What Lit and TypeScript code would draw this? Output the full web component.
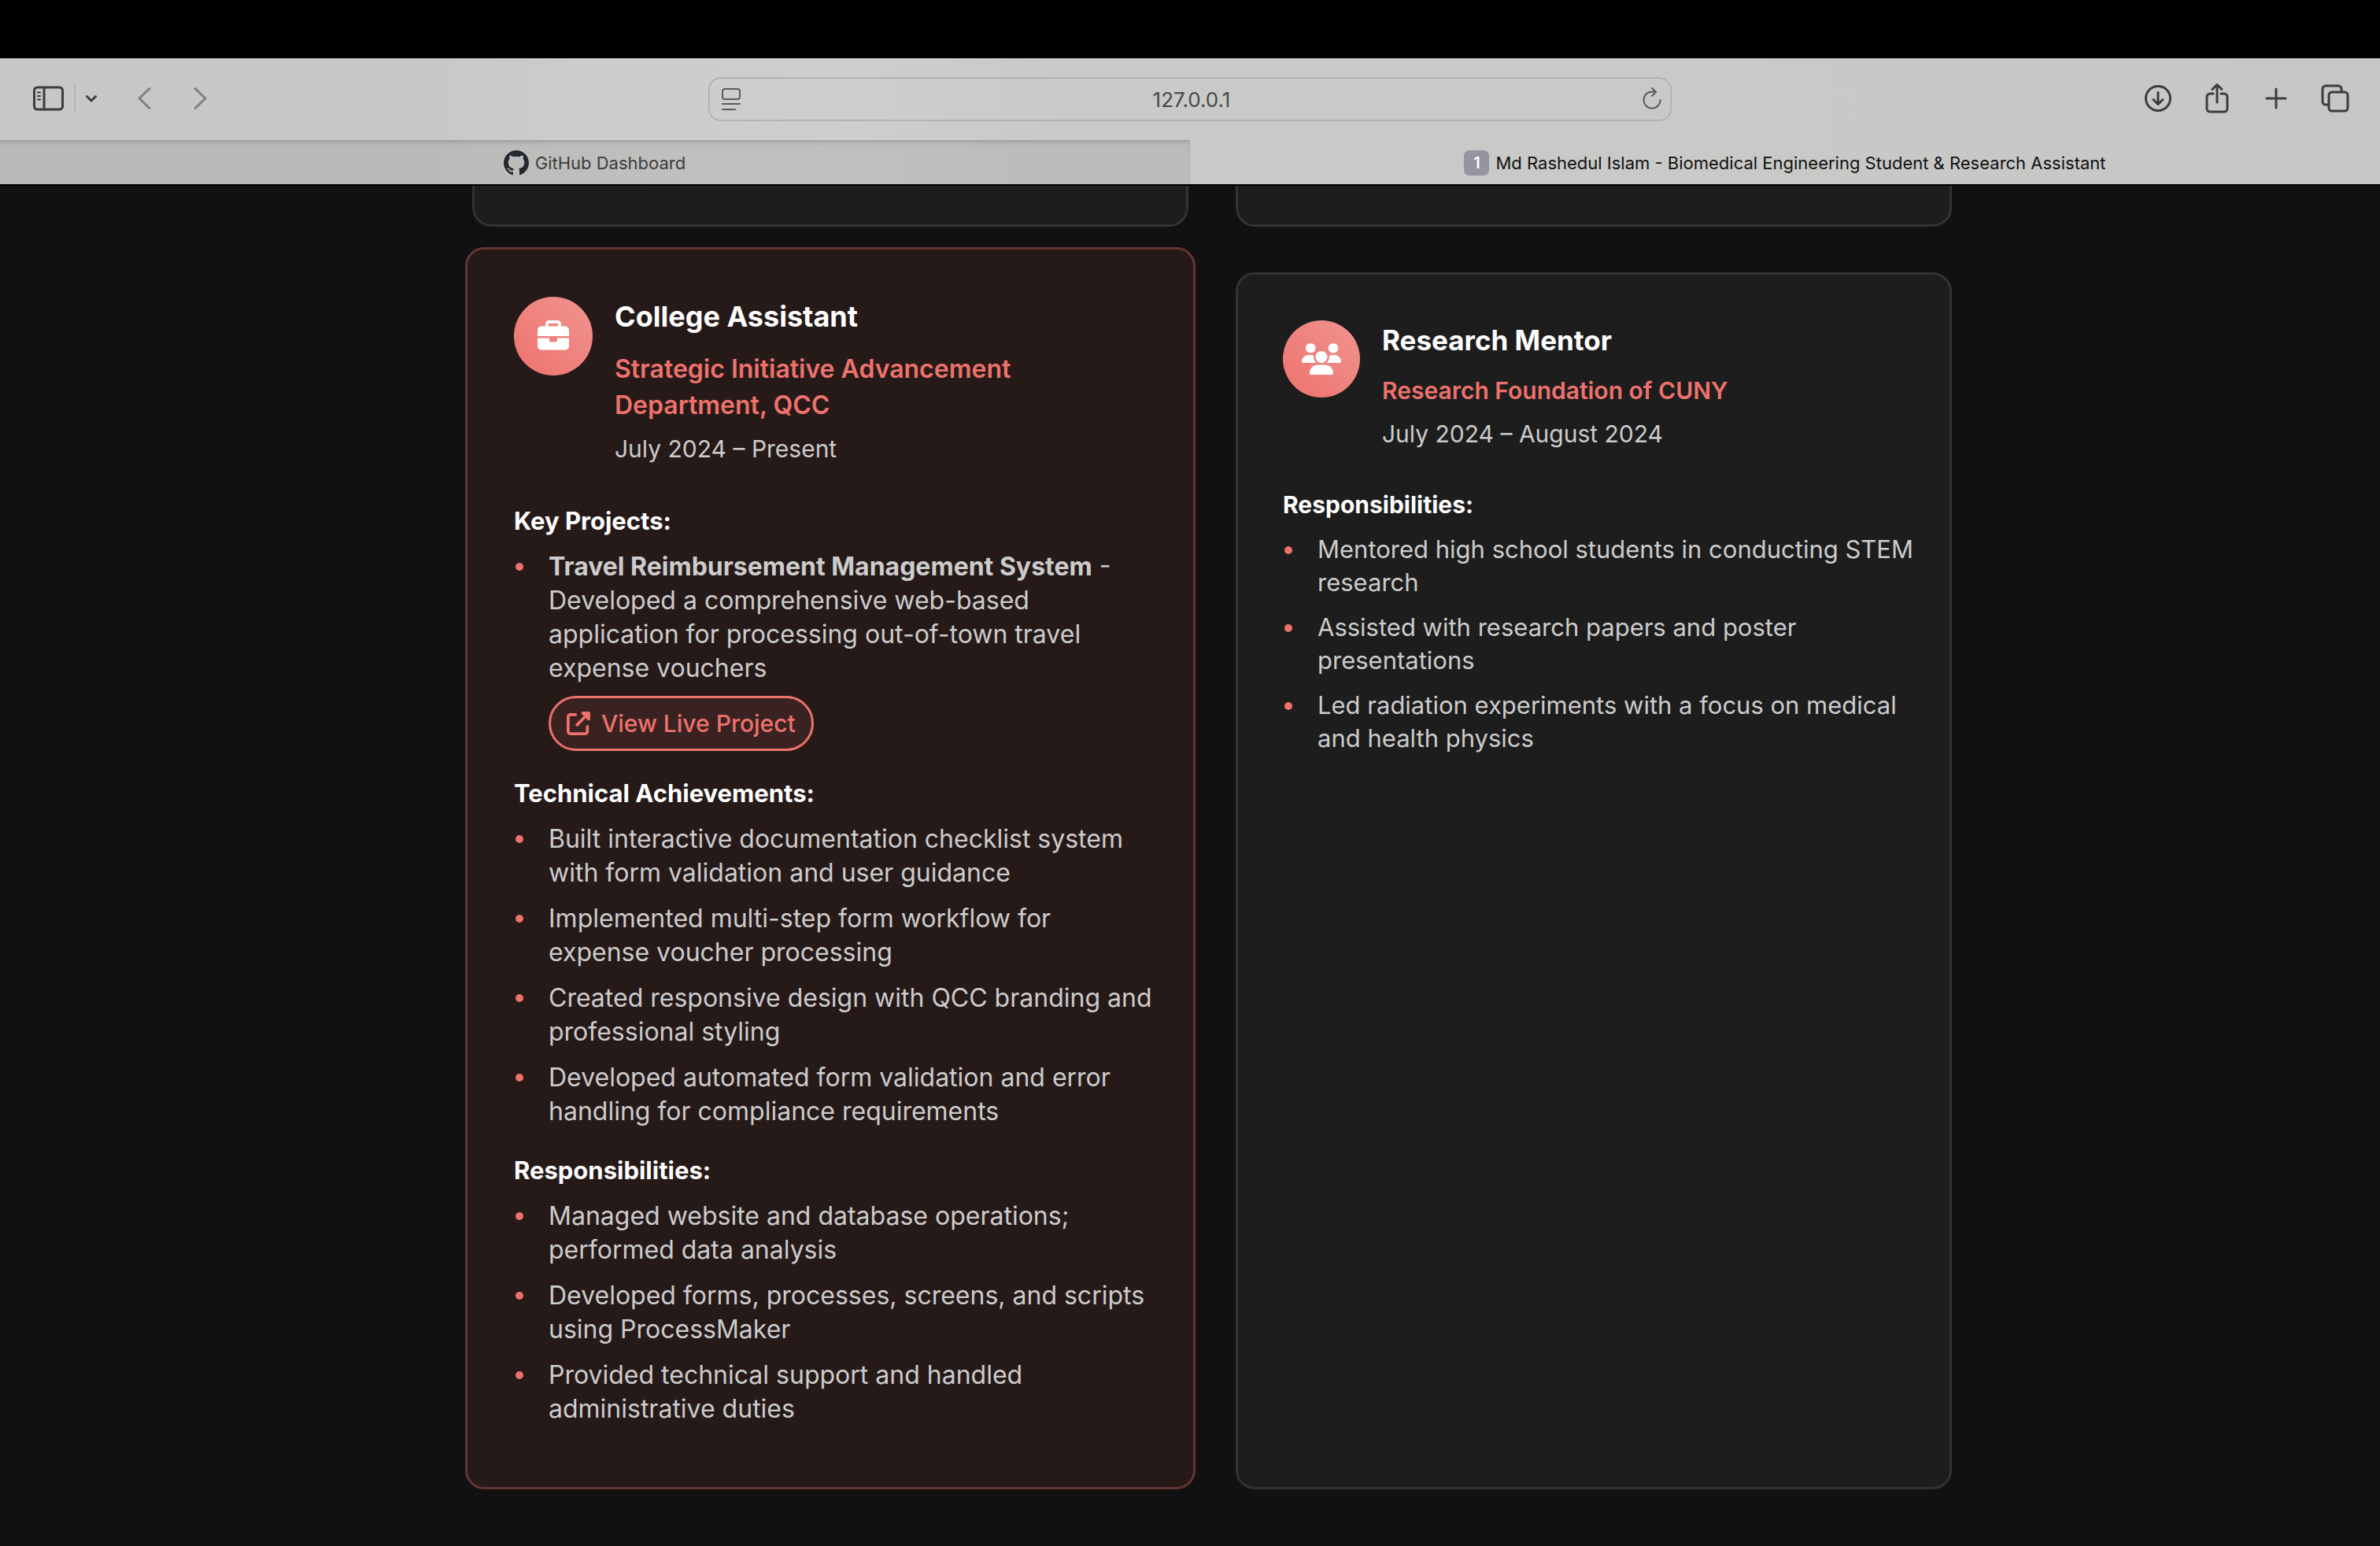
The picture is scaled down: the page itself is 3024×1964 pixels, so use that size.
import { LitElement, html, svg, css, nothing } from "lit";
import { customElement } from "lit/decorators.js";

interface Item { lead?: string; text: string; link?: string }
interface Section { title: string; items: Item[] }
interface Job { icon: "briefcase" | "users"; role: string; org: string; dates: string; active: boolean; sections: Section[] }

const JOBS: Job[] = [
  {
    icon: "briefcase",
    role: "College Assistant",
    org: "Strategic Initiative Advancement Department, QCC",
    dates: "July 2024 – Present",
    active: true,
    sections: [
      {
        title: "Key Projects:",
        items: [
          {
            lead: "Travel Reimbursement Management System",
            text: " - Developed a comprehensive web-based application for processing out-of-town travel expense vouchers",
            link: "View Live Project",
          },
        ],
      },
      {
        title: "Technical Achievements:",
        items: [
          { text: "Built interactive documentation checklist system with form validation and user guidance" },
          { text: "Implemented multi-step form workflow for expense voucher processing" },
          { text: "Created responsive design with QCC branding and professional styling" },
          { text: "Developed automated form validation and error handling for compliance requirements" },
        ],
      },
      {
        title: "Responsibilities:",
        items: [
          { text: "Managed website and database operations; performed data analysis" },
          { text: "Developed forms, processes, screens, and scripts using ProcessMaker" },
          { text: "Provided technical support and handled administrative duties" },
        ],
      },
    ],
  },
  {
    icon: "users",
    role: "Research Mentor",
    org: "Research Foundation of CUNY",
    dates: "July 2024 – August 2024",
    active: false,
    sections: [
      {
        title: "Responsibilities:",
        items: [
          { text: "Mentored high school students in conducting STEM research" },
          { text: "Assisted with research papers and poster presentations" },
          { text: "Led radiation experiments with a focus on medical and health physics" },
        ],
      },
    ],
  },
];

const JOB_ICONS = {
  briefcase: svg`<svg viewBox="0 0 512 512" width="40" height="40" fill="#fff" aria-hidden="true"><path d="M184 48H328c4.400 0 8 3.600 8 8V96H176V56c0-4.400 3.600-8 8-8zm-56 8V96H64C28.700 96 0 124.700 0 160v96H192 320 512V160c0-35.300-28.700-64-64-64H384V56c0-30.900-25.100-56-56-56H184c-30.900 0-56 25.100-56 56zM512 288H320v32c0 17.700-14.300 32-32 32H224c-17.700 0-32-14.300-32-32V288H0V416c0 35.300 28.700 64 64 64H448c35.300 0 64-28.700 64-64V288z"/></svg>`,
  users: svg`<svg viewBox="0 0 640 512" width="50" height="40" fill="#fff" aria-hidden="true"><path d="M144 0a80 80 0 1 1 0 160A80 80 0 1 1 144 0zM512 0a80 80 0 1 1 0 160A80 80 0 1 1 512 0zM0 298.700C0 239.800 47.800 192 106.700 192h42.700c15.900 0 31 3.500 44.600 9.700c-1.300 7.200-1.900 14.700-1.900 22.300c0 38.200 16.800 72.500 43.300 96c-.2 0-.4 0-.7 0H21.300C9.600 320 0 310.400 0 298.700zM405.300 320c-.2 0-.4 0-.7 0c26.600-23.500 43.300-57.800 43.300-96c0-7.600-.7-15-1.900-22.300c13.600-6.300 28.700-9.700 44.600-9.700h42.700C592.200 192 640 239.800 640 298.700c0 11.800-9.600 21.300-21.300 21.300H405.300zM224 224a96 96 0 1 1 192 0 96 96 0 1 1-192 0zM128 485.300C128 411.700 187.700 352 261.300 352H378.700C452.300 352 512 411.700 512 485.300c0 14.700-11.900 26.700-26.700 26.700H154.700c-14.700 0-26.700-11.900-26.700-26.700z"/></svg>`,
};

@customElement("browser-chrome")
export class BrowserChrome extends LitElement {
  static styles = css`
    :host { display: block; font-family: Inter, "Liberation Sans", sans-serif; }
    .menu-strip { height: 74px; background: #000; }
    .chrome { background: linear-gradient(90deg, #c7c7c5 0%, #c7c7c5 17%, #cccccb 24%, #cececc 36%, #c9c9c7 45%, #c9c9c7 70%, #c6c6c5 100%); }
    .toolbar { height: 104px; display: grid; grid-template-columns: 1fr 1224px 1fr; align-items: center; }
    .group { display: flex; align-items: center; padding-bottom: 2px; }
    .left { padding-left: 40px; }
    .right { justify-content: flex-end; gap: 33px; padding-right: 36px; }
    button { border: 0; padding: 0; margin: 0; background: none; color: #3d3d3c; font: inherit; display: block; }
    svg { display: block; }
    .divider { width: 2px; height: 36px; background: #b6b6b4; margin: 0 12px; }
    .nav { color: #7f7f7e; }
    .back { margin-left: 50px; }
    .forward { margin-left: 50px; }
    .address { display: flex; align-items: center; height: 56px; box-sizing: border-box; border: 2px solid #b2b2b0; border-radius: 16px; padding: 0 10px 0 14px; color: #5b5b5a; }
    .address input { flex: 1; min-width: 0; border: 0; padding: 0; background: none; outline: none; text-align: center; font: 26px Inter, "Liberation Sans", sans-serif; color: #484847; }
    .address button { color: #5b5b5a; }
    .tabs { display: grid; grid-template-columns: 1fr 1fr; height: 58px; border-bottom: 2px solid #000; box-sizing: border-box; }
    .tab { display: flex; align-items: center; justify-content: center; gap: 8px; padding-top: 2px; font-size: 22px; color: #111; text-decoration: none; }
    .inactive { background: linear-gradient(#00000038 0, #0000001c 4px, #00000012 8px, #00000012 100%); border-right: 1px solid #aaaaa8; color: #3c3c3b; }
    .badge { width: 32px; height: 32px; border-radius: 7px; background: #9495a1; color: #fff; font-weight: 600; font-size: 20px; line-height: 32px; text-align: center; }
  `;

  render() {
    return html`
      <div class="menu-strip"></div>
      <div class="chrome">
        <div class="toolbar">
          <div class="group left">
            <button aria-label="Show sidebar">
              <svg width="42" height="34" viewBox="0 0 42 34" fill="none" stroke="currentColor" stroke-width="3" stroke-linecap="round"><rect x="3.500" y="3" width="36" height="28" rx="4"/><path d="M16 3v28"/><path d="M8 9.500h3M8 14h3M8 18.500h3" stroke-width="2"/></svg>
            </button>
            <div class="divider"></div>
            <button aria-label="Tab groups">
              <svg width="16" height="12" viewBox="0 0 16 12" fill="none" stroke="currentColor" stroke-width="3" stroke-linecap="round" stroke-linejoin="round"><path d="M2.500 3.500l5.500 5.500 5.500-5.500"/></svg>
            </button>
            <button class="nav back" aria-label="Back">
              <svg width="20" height="32" viewBox="0 0 20 32" fill="none" stroke="currentColor" stroke-width="3" stroke-linecap="round" stroke-linejoin="round"><path d="M16 3.500L3 16l13 12.500"/></svg>
            </button>
            <button class="nav forward" aria-label="Forward">
              <svg width="20" height="32" viewBox="0 0 20 32" fill="none" stroke="currentColor" stroke-width="3" stroke-linecap="round" stroke-linejoin="round"><path d="M4 3.500l13 12.500L4 28.500"/></svg>
            </button>
          </div>
          <div class="address">
            <svg width="26" height="30" viewBox="0 0 26 30" fill="none" stroke="currentColor" stroke-width="2" stroke-linecap="round"><rect x="2" y="2" width="22" height="13" rx="3"/><path d="M2 21h22M2 28h16"/></svg>
            <input aria-label="Address" value="127.0.0.1" />
            <button aria-label="Reload">
              <svg width="26" height="30" viewBox="0 0 26 30" fill="none" stroke="currentColor" stroke-width="2" stroke-linecap="round" stroke-linejoin="round"><path d="M23.500 16a10.500 10.500 0 1 1-10.500-10.500h4"/><path d="M13 1l5 4.700-5 5"/></svg>
            </button>
          </div>
          <div class="group right">
            <button aria-label="Downloads">
              <svg width="42" height="38" viewBox="-2 0 42 38" fill="none" stroke="currentColor" stroke-width="3" stroke-linecap="round" stroke-linejoin="round"><circle cx="19" cy="19" r="15.500"/><path d="M19 11.500v15M13 20.500l6 6 6-6"/></svg>
            </button>
            <button aria-label="Share">
              <svg width="42" height="42" viewBox="0 0 42 42" fill="none" stroke="currentColor" stroke-width="3" stroke-linecap="round" stroke-linejoin="round"><path d="M16 15h-4a4 4 0 0 0-4 4v15a4 4 0 0 0 4 4h18a4 4 0 0 0 4-4V19a4 4 0 0 0-4-4h-4"/><path d="M21 26V4M15 9.500L21 3.500l6 6"/></svg>
            </button>
            <button aria-label="New tab">
              <svg width="42" height="30" viewBox="0 0 42 30" fill="none" stroke="currentColor" stroke-width="3" stroke-linecap="round"><path d="M21 3v24M9 15h24"/></svg>
            </button>
            <button aria-label="Tab overview">
              <svg width="42" height="38" viewBox="-2 0 42 38" fill="none" stroke="currentColor" stroke-width="3" stroke-linejoin="round"><rect x="11" y="11" width="24" height="24" rx="4"/><path d="M11 27H7a4 4 0 0 1-4-4V7a4 4 0 0 1 4-4h16a4 4 0 0 1 4 4v4"/></svg>
            </button>
          </div>
        </div>
        <nav class="tabs">
          <a class="tab inactive" href="#github">
            <svg width="32" height="32" viewBox="0 0 16 16" fill="#24292f" aria-hidden="true"><path d="M8 0C3.580 0 0 3.580 0 8c0 3.540 2.290 6.530 5.470 7.590.4.070.55-.17.55-.38 0-.19-.01-.82-.01-1.490-2.010.37-2.530-.49-2.690-.94-.09-.23-.48-.94-.82-1.130-.28-.15-.68-.52-.01-.53.63-.01 1.080.58 1.230.82.72 1.210 1.870.87 2.330.66.07-.52.28-.87.51-1.070-1.780-.2-3.640-.89-3.640-3.950 0-.87.31-1.590.82-2.150-.08-.2-.36-1.020.08-2.120 0 0 .67-.21 2.200.82.64-.18 1.320-.27 2-.27s1.360.09 2 .27c1.530-1.040 2.200-.82 2.200-.82.44 1.100.16 1.920.08 2.120.51.56.82 1.270.82 2.150 0 3.070-1.870 3.750-3.650 3.950.29.25.54.73.54 1.480 0 1.070-.01 1.930-.01 2.200 0 .21.15.46.55.38A8.010 8.010 0 0 0 16 8c0-4.420-3.580-8-8-8z"/></svg>
            <span>GitHub Dashboard</span>
          </a>
          <a class="tab" href="#portfolio">
            <span class="badge">1</span>
            <span>Md Rashedul Islam - Biomedical Engineering Student &amp; Research Assistant</span>
          </a>
        </nav>
      </div>
    `;
  }
}

@customElement("job-card")
export class JobCard extends LitElement {
  static properties = { job: { attribute: false } };
  declare job: Job;

  static styles = css`
    :host { display: block; }
    .card {
      --role: 35px; --org: 30px; --body: 31px; --head: 30px; --line: 42px; --medal: 98px; --title-gap: 16px; --header-gap: 42px;
      height: 100%; box-sizing: border-box; background: #1d1d1d; border: 3px solid #333; border-radius: 24px; padding: 58px 42px 48px 57px;
    }
    .card.active {
      --role: 36px; --org: 32px; --body: 32px; --head: 31px; --line: 43px; --medal: 100px; --title-gap: 19px; --header-gap: 44px;
      background: #261a19; border-color: #633433; padding: 60px 48px 48px 59px;
    }
    header { display: flex; gap: 28px; margin-bottom: var(--header-gap); }
    .medal { flex: none; width: var(--medal); height: var(--medal); border-radius: 50%; background: linear-gradient(45deg, #ee726c, #f09490); display: flex; align-items: center; justify-content: center; }
    h3 { margin: 0 0 var(--title-gap); font-size: var(--role); line-height: 50px; font-weight: 700; color: #fff; }
    .org { margin: 0 0 8px; font-size: var(--org); line-height: 46px; font-weight: 600; color: #ee726c; }
    .dates { margin: 0; font-size: 30px; line-height: 48px; color: #ccc; }
    h4 { margin: 0 0 12px; font-size: var(--head); line-height: 48px; font-weight: 700; color: #fff; }
    ul { list-style: none; margin: 0 0 30px; padding: 0; }
    li { display: grid; grid-template-columns: 44px 1fr; margin-bottom: 15px; font-size: var(--body); line-height: var(--line); color: #ccc; }
    li::before { content: ""; width: 10px; height: 10px; border-radius: 50%; background: #ee726c; margin: 17px 0 0 2px; }
    .link { display: flex; width: max-content; box-sizing: border-box; height: 70px; margin-top: 14px; padding: 0 20px; align-items: center; gap: 14px; border: 3px solid #ee726c; border-radius: 35px; background: #3a2222; color: #ee726c; text-decoration: none; font-size: 30px; font-weight: 500; }
    svg { display: block; }
  `;

  render() {
    const { job } = this;
    return html`
      <article class="card ${job.active ? "active" : ""}">
        <header>
          <div class="medal">${JOB_ICONS[job.icon]}</div>
          <div>
            <h3>${job.role}</h3>
            <p class="org">${job.org}</p>
            <p class="dates">${job.dates}</p>
          </div>
        </header>
        ${job.sections.map((s) => html`
          <h4>${s.title}</h4>
          <ul>${s.items.map((i) => html`
            <li><div>${i.lead ? html`<strong>${i.lead}</strong>` : nothing}${i.text}${i.link ? html`
              <a class="link" href="#live-project">
                <svg width="30" height="30" viewBox="0 0 512 512" fill="currentColor" aria-hidden="true"><path d="M352 0c-12.900 0-24.600 7.800-29.600 19.800s-2.200 25.700 6.900 34.900L370.700 96 201.400 265.400c-12.500 12.500-12.500 32.800 0 45.300s32.800 12.500 45.300 0L416 141.300l41.400 41.400c9.200 9.200 22.900 11.900 34.900 6.900s19.800-16.600 19.800-29.600V32c0-17.700-14.300-32-32-32H352zM80 32C35.800 32 0 67.800 0 112V432c0 44.200 35.800 80 80 80H400c44.200 0 80-35.800 80-80V320c0-17.700-14.300-32-32-32s-32 14.300-32 32V432c0 8.800-7.200 16-16 16H80c-8.800 0-16-7.200-16-16V112c0-8.800 7.200-16 16-16H192c17.700 0 32-14.300 32-32s-14.300-32-32-32H80z"/></svg>
                <span>${i.link}</span>
              </a>` : nothing}</div></li>`)}
          </ul>`)}
      </article>
    `;
  }
}

@customElement("app-root")
export class AppRoot extends LitElement {
  static styles = css`
    :host { display: block; min-height: 100vh; background: #111; font-family: Inter, "Open Sans", sans-serif; }
    .page { max-width: 1880px; margin: 0 auto; padding: 0 0 72px 56px; }
    .row { display: grid; grid-template-columns: 1fr 1fr; column-gap: 60px; }
    .tail { height: 52px; box-sizing: border-box; background: #1d1d1d; border: 3px solid #333; border-top: 0; border-radius: 0 0 24px 24px; }
    .row.jobs { margin-top: 58px; }
    .raised { margin: -32px -9px 0; }
  `;

  render() {
    return html`
      <browser-chrome></browser-chrome>
      <main class="page">
        <div class="row"><div class="tail"></div><div class="tail"></div></div>
        <div class="row jobs">
          ${JOBS.map((j) => html`<job-card class=${j.active ? "raised" : ""} .job=${j}></job-card>`)}
        </div>
      </main>
    `;
  }
}
